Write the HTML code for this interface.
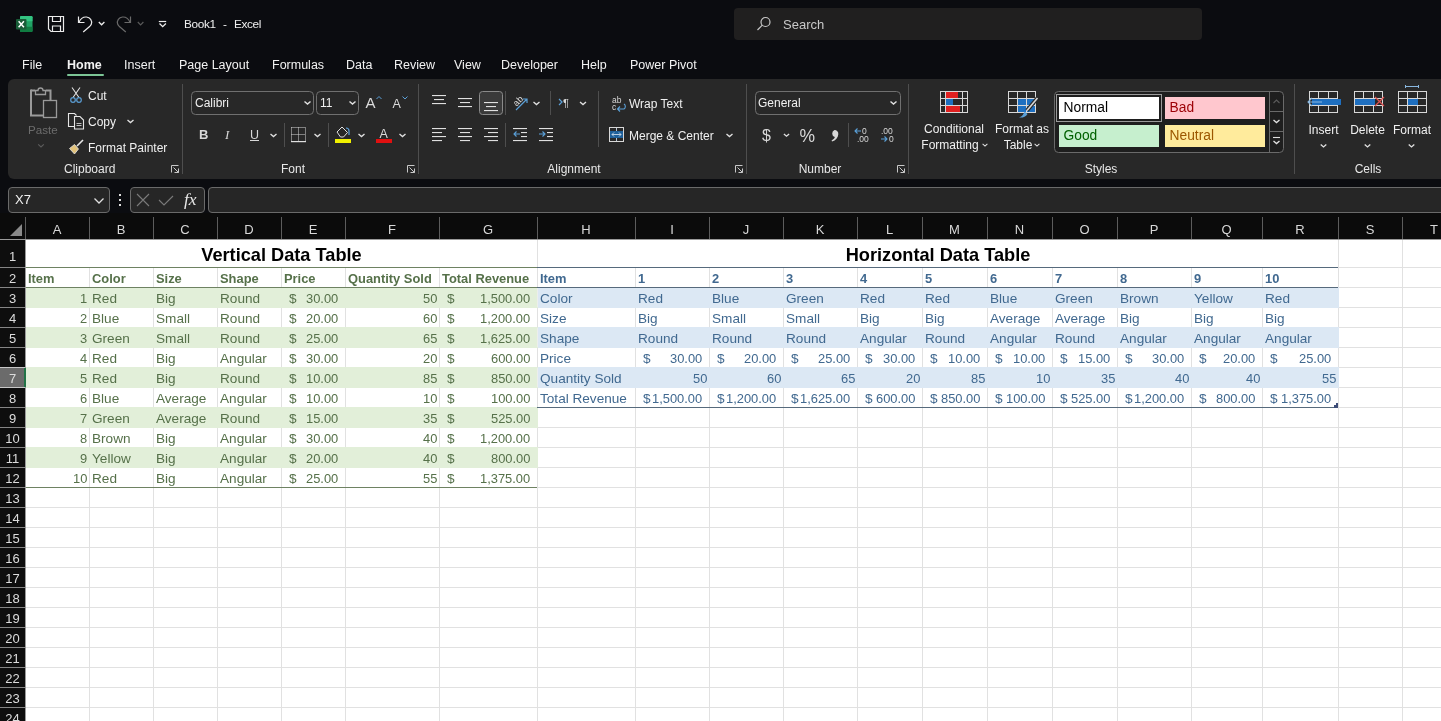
<!DOCTYPE html><html><head><meta charset="utf-8"><style>
*{margin:0;padding:0;box-sizing:border-box}
html,body{width:1441px;height:721px;overflow:hidden;background:#0b0c10;font-family:"Liberation Sans",sans-serif;position:relative}
.a,.c{will-change:transform}
.a{position:absolute;white-space:nowrap}
.ui{color:#e8e8e8;font-size:12.5px}
.lbl{color:#dcdcdc;font-size:12px}
.sep{position:absolute;width:1px;background:#4d4d4d}
.box{position:absolute;border:1px solid #6a6a6a;border-radius:4px;background:#262626}
.grid{position:absolute;left:0;top:0}
.c{position:absolute;font-size:13.6px;line-height:20px;height:20px;white-space:nowrap}
.g{color:#56714a}
.b{color:#416990}
.bold{font-weight:bold;font-size:12.9px}
.n{font-size:12.9px}
</style></head><body><div class="a" style="left:0;top:0;width:1441px;height:79px;background:#0b0c10"></div><svg class="a" style="left:0;top:0" width="200" height="40" viewBox="0 0 200 40">
<rect x="20" y="16" width="12.5" height="16" rx="1.2" fill="#21a366"/>
<path d="M21.2 16h10.1a1.2 1.2 0 0 1 1.2 1.2V21.3H20V17.2A1.2 1.2 0 0 1 21.2 16z" fill="#33c481"/>
<path d="M20 26.7h12.5v4.1a1.2 1.2 0 0 1-1.2 1.2H21.2a1.2 1.2 0 0 1-1.2-1.2z" fill="#107c41"/>
<rect x="16" y="19" width="10.5" height="10.5" rx="1" fill="#185c37"/>
<path d="M18.6 21.3l5.3 6M23.9 21.3l-5.3 6" stroke="#fff" stroke-width="1.5"/>
<g fill="none" stroke="#ececec" stroke-width="1.2">
<path d="M48.5 16.5h15v15H51l-2.5-2.5z"/><path d="M52.5 16.5v5h8v-5"/><path d="M52.5 31.5v-5.5h8v5.5"/>
<path d="M78.5 16.5v6h6"/><path d="M79 22.2C80.5 18.5 83.5 16.8 86.5 17c3.6 0.3 6 3.8 4.8 7.2-0.3 0.8-0.8 1.4-1.4 2L83.2 32"/>
<path d="M98.8 22l2.8 2.8 2.8-2.8" stroke-width="1.3"/>
<path d="M162.5 21.5h-0M158.8 21.5h7.4"/><path d="M159.5 23.5l3.2 3.2 3.2-3.2" stroke-width="1.3"/>
</g>
<g fill="none" stroke="#6a6a6a" stroke-width="1.2">
<path d="M130.5 16.5v6h-6"/><path d="M130 22.2C128.5 18.5 125.5 16.8 122.5 17c-3.6 0.3-6 3.8-4.8 7.2 0.3 0.8 0.8 1.4 1.4 2L125.8 32"/>
<path d="M137.8 22l2.8 2.8 2.8-2.8" stroke-width="1.2" stroke="#5a5a5a"/>
</g>
</svg><div class="a" style="left:183.5px;top:16px;font-size:11.8px;letter-spacing:-0.35px;color:#f0f0f0;line-height:16px">Book1</div><div class="a" style="left:223px;top:16px;font-size:11.8px;color:#f0f0f0;line-height:16px">-</div><div class="a" style="left:234px;top:16px;font-size:11.8px;letter-spacing:-0.35px;color:#f0f0f0;line-height:16px">Excel</div><div class="a" style="left:734px;top:8px;width:468px;height:32px;background:#201f1f;border-radius:4px"></div><svg class="a" style="left:756px;top:16px" width="16" height="16" viewBox="0 0 16 16" fill="none" stroke="#c8c8c8" stroke-width="1.2">
<circle cx="9.5" cy="6" r="4.5"/><path d="M6.3 9.2L1.5 14"/></svg><div class="a" style="left:783px;top:17px;font-size:13px;color:#c8c8c8;line-height:16px">Search</div><div class="a" style="left:22px;top:57px;font-size:12.5px;color:#f2f2f2;line-height:16px;font-weight:normal">File</div><div class="a" style="left:67px;top:57px;font-size:12.5px;color:#f2f2f2;line-height:16px;font-weight:bold">Home</div><div class="a" style="left:124px;top:57px;font-size:12.5px;color:#f2f2f2;line-height:16px;font-weight:normal">Insert</div><div class="a" style="left:179px;top:57px;font-size:12.5px;color:#f2f2f2;line-height:16px;font-weight:normal">Page Layout</div><div class="a" style="left:272px;top:57px;font-size:12.5px;color:#f2f2f2;line-height:16px;font-weight:normal">Formulas</div><div class="a" style="left:346px;top:57px;font-size:12.5px;color:#f2f2f2;line-height:16px;font-weight:normal">Data</div><div class="a" style="left:394px;top:57px;font-size:12.5px;color:#f2f2f2;line-height:16px;font-weight:normal">Review</div><div class="a" style="left:454px;top:57px;font-size:12.5px;color:#f2f2f2;line-height:16px;font-weight:normal">View</div><div class="a" style="left:501px;top:57px;font-size:12.5px;color:#f2f2f2;line-height:16px;font-weight:normal">Developer</div><div class="a" style="left:581px;top:57px;font-size:12.5px;color:#f2f2f2;line-height:16px;font-weight:normal">Help</div><div class="a" style="left:630px;top:57px;font-size:12.5px;color:#f2f2f2;line-height:16px;font-weight:normal">Power Pivot</div><div class="a" style="left:67px;top:74px;width:37px;height:2px;background:#7cc596;border-radius:1px"></div><div class="a" style="left:8px;top:79px;width:1450px;height:100px;background:#282828;border-radius:6px"></div><svg class="a" style="left:0;top:79px" width="1441" height="100" viewBox="0 79 1441 100" font-family="Liberation Sans"><path d="M31 90.5h4M46 90.5h4.5v10" fill="none" stroke="#9a9a9a" stroke-width="2"/><path d="M31 89.5v26h12" fill="none" stroke="#9a9a9a" stroke-width="2"/><path d="M35.5 94.5v-4h2.5a2.5 2.5 0 0 1 5 0h2.5v4z" fill="none" stroke="#9a9a9a" stroke-width="1.3"/><rect x="43.5" y="100.5" width="13" height="17" fill="none" stroke="#9a9a9a" stroke-width="1.3"/><text x="28" y="134" font-size="11.6" fill="#6c6c6c" text-anchor="start" >Paste</text><path d="M38.2 144.4l2.8 2.52l2.8 -2.52" fill="none" stroke="#5c5c5c" stroke-width="1.2"/><path d="M72 87.5l7 10M80 87.5l-7 10" fill="none" stroke="#e0e0e0" stroke-width="1.1"/><circle cx="73" cy="100" r="2.3" fill="none" stroke="#5a9bd0" stroke-width="1.2"/><circle cx="79" cy="100" r="2.3" fill="none" stroke="#5a9bd0" stroke-width="1.2"/><text x="88" y="100" font-size="12" fill="#f0f0f0" text-anchor="start" >Cut</text><path d="M74 126.5h-5.5v-13h6l2 2" fill="none" stroke="#e6e6e6" stroke-width="1.1"/><path d="M74.5 116.5h5.5l3.5 3.5v9h-9z" fill="none" stroke="#e6e6e6" stroke-width="1.1"/><path d="M76.5 123.5h5M76.5 125.5h5" stroke="#e6e6e6" stroke-width="0.8"/><text x="88" y="126" font-size="12" fill="#f0f0f0" text-anchor="start" >Copy</text><path d="M127.5 119.9l3 2.7l3 -2.7" fill="none" stroke="#e0e0e0" stroke-width="1.3"/><path d="M83 140l-6 6" stroke="#e6e6e6" stroke-width="1.6"/><path d="M69.5 148.5l5-4 4 4.5-4 5z" fill="#e2c27a" stroke="#e6e6e6" stroke-width="0.8"/><text x="88" y="152" font-size="12" fill="#f0f0f0" text-anchor="start" >Format Painter</text><text x="64" y="173" font-size="12" fill="#e8e8e8" text-anchor="start" >Clipboard</text><path d="M171.5 172.5v-7h7" fill="none" stroke="#c8c8c8" stroke-width="1"/><path d="M173.5 167.5l5 5M178.5 168.5v4h-4" fill="none" stroke="#c8c8c8" stroke-width="1"/><rect x="182" y="84" width="1" height="90" fill="#4e4e4e"/><rect x="191.5" y="91.5" width="122" height="23" rx="4" fill="none" stroke="#707070"/><text x="195" y="107" font-size="12" fill="#f0f0f0" text-anchor="start" >Calibri</text><path d="M304.5 101.4l3 2.7l3 -2.7" fill="none" stroke="#e0e0e0" stroke-width="1.4"/><rect x="316.5" y="91.5" width="42" height="23" rx="4" fill="none" stroke="#707070"/><text x="320" y="107" font-size="12" fill="#f0f0f0" text-anchor="start" >11</text><path d="M349.5 101.4l3 2.7l3 -2.7" fill="none" stroke="#e0e0e0" stroke-width="1.4"/><text x="365.5" y="107.5" font-size="15" fill="#dadada" text-anchor="start" >A</text><path d="M376.5 99l2.5-2.5 2.5 2.5" fill="none" stroke="#5ba0d8" stroke-width="1"/><text x="392.5" y="107.5" font-size="12.5" fill="#dadada" text-anchor="start" >A</text><path d="M402.5 96.5l2.5 2.5 2.5-2.5" fill="none" stroke="#5ba0d8" stroke-width="1"/><text x="199" y="139" font-size="13" fill="#d8d8d8" text-anchor="start" font-weight="bold">B</text><text x="225" y="139" font-size="13" fill="#d8d8d8" text-anchor="start" font-style="italic" font-family="Liberation Serif">I</text><text x="250" y="139" font-size="12.5" fill="#d8d8d8" text-anchor="start" >U</text><rect x="250" y="140" width="9" height="1" fill="#d8d8d8"/><path d="M270.5 133.9l3 2.7l3 -2.7" fill="none" stroke="#e0e0e0" stroke-width="1.3"/><rect x="284" y="123" width="1" height="24" fill="#4e4e4e"/><path d="M291.5 127.5h14v14M291.5 127.5v14M298.5 127.5v14M291.5 134.5h14" fill="none" stroke="#d8d8d8" stroke-width="1" stroke-dasharray="1 1"/><rect x="291" y="141" width="15" height="1.2" fill="#e0e0e0"/><path d="M314.5 133.9l3 2.7l3 -2.7" fill="none" stroke="#e0e0e0" stroke-width="1.3"/><rect x="328" y="123" width="1" height="24" fill="#4e4e4e"/><path d="M337 132l5-5 5.5 5.5-4 4.5h-3z" fill="none" stroke="#e0e0e0" stroke-width="1"/><path d="M346 128a3 3 0 0 1 3 3v4" fill="none" stroke="#5ba0d8" stroke-width="1.2"/><rect x="335" y="139" width="16" height="4" fill="#f0f000"/><path d="M358.5 133.9l3 2.7l3 -2.7" fill="none" stroke="#e0e0e0" stroke-width="1.3"/><text x="379.5" y="138" font-size="12.5" fill="#dadada" text-anchor="start" >A</text><rect x="376" y="139" width="16" height="4" fill="#e01010"/><path d="M399.5 133.9l3 2.7l3 -2.7" fill="none" stroke="#e0e0e0" stroke-width="1.3"/><text x="293" y="173" font-size="12" fill="#e8e8e8" text-anchor="middle" >Font</text><path d="M407.5 172.5v-7h7" fill="none" stroke="#c8c8c8" stroke-width="1"/><path d="M409.5 167.5l5 5M414.5 168.5v4h-4" fill="none" stroke="#c8c8c8" stroke-width="1"/><rect x="418" y="84" width="1" height="90" fill="#4e4e4e"/><rect x="432" y="95" width="14" height="1.1" fill="#e0e0e0"/><rect x="434" y="99" width="10" height="1.1" fill="#e0e0e0"/><rect x="432" y="103" width="14" height="1.1" fill="#e0e0e0"/><rect x="458" y="98" width="14" height="1.1" fill="#e0e0e0"/><rect x="460" y="102" width="10" height="1.1" fill="#e0e0e0"/><rect x="458" y="106" width="14" height="1.1" fill="#e0e0e0"/><rect x="479.5" y="91.5" width="23" height="23" rx="3" fill="#3a3a3a" stroke="#8a8a8a"/><rect x="484" y="102" width="14" height="1.1" fill="#e0e0e0"/><rect x="486" y="106" width="10" height="1.1" fill="#e0e0e0"/><rect x="484" y="110" width="14" height="1.1" fill="#e0e0e0"/><rect x="505" y="91" width="1" height="24" fill="#4e4e4e"/><text x="513" y="104" font-size="9" fill="#e0e0e0" transform="rotate(-45 518 101)">ab</text><path d="M516 110l11-11M523 99h4v4" fill="none" stroke="#5ba0d8" stroke-width="1.2"/><path d="M533.5 101.9l3 2.7l3 -2.7" fill="none" stroke="#e0e0e0" stroke-width="1.3"/><rect x="550" y="91" width="1" height="24" fill="#4e4e4e"/><path d="M559 99l3 3-3 3" fill="none" stroke="#5ba0d8" stroke-width="1.2"/><text x="563" y="107" font-size="11" fill="#d8d8d8" text-anchor="start" >¶</text><path d="M580 101.9l3 2.7l3 -2.7" fill="none" stroke="#e0e0e0" stroke-width="1.3"/><rect x="598" y="91" width="1" height="56" fill="#4e4e4e"/><rect x="432" y="128" width="14" height="1.1" fill="#e0e0e0"/><rect x="432" y="132" width="10" height="1.1" fill="#e0e0e0"/><rect x="432" y="136" width="14" height="1.1" fill="#e0e0e0"/><rect x="432" y="140" width="10" height="1.1" fill="#e0e0e0"/><rect x="458" y="128" width="14" height="1.1" fill="#e0e0e0"/><rect x="460" y="132" width="10" height="1.1" fill="#e0e0e0"/><rect x="458" y="136" width="14" height="1.1" fill="#e0e0e0"/><rect x="460" y="140" width="10" height="1.1" fill="#e0e0e0"/><rect x="484" y="128" width="14" height="1.1" fill="#e0e0e0"/><rect x="488" y="132" width="10" height="1.1" fill="#e0e0e0"/><rect x="484" y="136" width="14" height="1.1" fill="#e0e0e0"/><rect x="488" y="140" width="10" height="1.1" fill="#e0e0e0"/><rect x="505" y="123" width="1" height="24" fill="#4e4e4e"/><rect x="513" y="128" width="14" height="1.1" fill="#e0e0e0"/><rect x="513" y="140" width="14" height="1.1" fill="#e0e0e0"/><rect x="521" y="132" width="6" height="1.1" fill="#e0e0e0"/><rect x="521" y="136" width="6" height="1.1" fill="#e0e0e0"/><path d="M520 134h-6M516.5 131.5l-2.5 2.5 2.5 2.5" fill="none" stroke="#5ba0d8" stroke-width="1.1"/><rect x="539" y="128" width="14" height="1.1" fill="#e0e0e0"/><rect x="539" y="140" width="14" height="1.1" fill="#e0e0e0"/><rect x="547" y="132" width="6" height="1.1" fill="#e0e0e0"/><rect x="547" y="136" width="6" height="1.1" fill="#e0e0e0"/><path d="M539 134h6M542.5 131.5l2.5 2.5-2.5 2.5" fill="none" stroke="#5ba0d8" stroke-width="1.1"/><text x="612" y="102.5" font-size="8.5" fill="#d8d8d8" text-anchor="start" >ab</text><text x="612" y="110" font-size="8.5" fill="#d8d8d8" text-anchor="start" >c</text><path d="M624 104a3 3 0 0 1 0 5h-6M620 106.5l-2.5 2.5 2.5 2.5" fill="none" stroke="#5ba0d8" stroke-width="1.1"/><text x="629" y="108" font-size="12" fill="#f0f0f0" text-anchor="start" >Wrap Text</text><rect x="609.5" y="127.5" width="14" height="14" fill="none" stroke="#d8d8d8"/><rect x="610" y="131" width="13" height="7" fill="#1e5f99"/><path d="M612 134.5h9M614 132.5l-2 2 2 2M619 132.5l2 2-2 2M616.5 128v3M616.5 138v3" fill="none" stroke="#c8d8e8" stroke-width="0.9"/><text x="629" y="140" font-size="12" fill="#f0f0f0" text-anchor="start" >Merge &amp; Center</text><path d="M726.5 133.9l3 2.7l3 -2.7" fill="none" stroke="#e0e0e0" stroke-width="1.3"/><text x="574" y="173" font-size="12" fill="#e8e8e8" text-anchor="middle" >Alignment</text><path d="M735.5 172.5v-7h7" fill="none" stroke="#c8c8c8" stroke-width="1"/><path d="M737.5 167.5l5 5M742.5 168.5v4h-4" fill="none" stroke="#c8c8c8" stroke-width="1"/><rect x="746" y="84" width="1" height="90" fill="#4e4e4e"/><rect x="755.5" y="91.5" width="145" height="23" rx="4" fill="none" stroke="#707070"/><text x="758" y="107" font-size="12" fill="#f0f0f0" text-anchor="start" >General</text><path d="M890.5 101.4l3 2.7l3 -2.7" fill="none" stroke="#e0e0e0" stroke-width="1.4"/><text x="762" y="141" font-size="16" fill="#d8d8d8" text-anchor="start" >$</text><path d="M783.9 133.9l2.6 2.3400000000000003l2.6 -2.3400000000000003" fill="none" stroke="#e0e0e0" stroke-width="1.3"/><text x="799.5" y="141.5" font-size="17.5" fill="#d8d8d8" text-anchor="start" >%</text><path d="M834.5 130a3.8 3.8 0 0 1 3.8 4.2c-0.3 3.5-2.5 6.2-6.3 7.3l-0.4-1c2-1 3-2.2 3.2-3.4a3.8 3.8 0 0 1-0.3-7.1z" fill="#d8d8d8"/><rect x="848" y="123" width="1" height="24" fill="#4e4e4e"/><path d="M861 131h-6M857.5 128.5l-2.5 2.5 2.5 2.5" fill="none" stroke="#5ba0d8" stroke-width="1.1"/><text x="862" y="134" font-size="8.5" fill="#d8d8d8" text-anchor="start" >0</text><text x="857" y="142" font-size="8.5" fill="#d8d8d8" text-anchor="start" >.00</text><text x="881" y="134" font-size="8.5" fill="#d8d8d8" text-anchor="start" >.00</text><path d="M881 139h6M884.5 136.5l2.5 2.5-2.5 2.5" fill="none" stroke="#5ba0d8" stroke-width="1.1"/><text x="889" y="142" font-size="8.5" fill="#d8d8d8" text-anchor="start" >0</text><text x="820" y="173" font-size="12" fill="#e8e8e8" text-anchor="middle" >Number</text><path d="M897.5 172.5v-7h7" fill="none" stroke="#c8c8c8" stroke-width="1"/><path d="M899.5 167.5l5 5M904.5 168.5v4h-4" fill="none" stroke="#c8c8c8" stroke-width="1"/><rect x="908" y="84" width="1" height="90" fill="#4e4e4e"/><rect x="946" y="92" width="12" height="6" fill="#e02020"/><rect x="946" y="99" width="7" height="6" fill="#1e6fc0"/><rect x="946" y="106" width="14" height="6" fill="#e02020"/><rect x="940.5" y="91.5" width="27" height="21" fill="none" stroke="#d8d8d8"/><path d="M945.5 92v20M962.5 92v20M941 98.5h26M941 105.5h26" stroke="#d8d8d8" stroke-width="1"/><text x="954" y="133" font-size="12" fill="#f0f0f0" text-anchor="middle" >Conditional</text><text x="950" y="149" font-size="12" fill="#f0f0f0" text-anchor="middle" >Formatting</text><path d="M982.6 143.9l2.4 2.16l2.4 -2.16" fill="none" stroke="#e0e0e0" stroke-width="1.1"/><rect x="1018" y="99" width="18" height="13" fill="#1e6fc0"/><rect x="1008.5" y="91.5" width="27" height="21" fill="none" stroke="#d8d8d8"/><path d="M1017.5 92v20M1026.5 92v20M1009 98.5h26M1009 105.5h26" stroke="#d8d8d8" stroke-width="1"/><path d="M1037.5 98l-10.5 12.5" stroke="#282828" stroke-width="4"/><path d="M1037.5 98l-10.5 12.5" stroke="#d8d8d8" stroke-width="1.6"/><path d="M1019 117.5c3-1 4.5-3 5.5-6l3 2.5c-2 3-5 4-8.5 3.5z" fill="#5ba0d8"/><text x="1022" y="133" font-size="12" fill="#f0f0f0" text-anchor="middle" >Format as</text><text x="1018" y="149" font-size="12" fill="#f0f0f0" text-anchor="middle" >Table</text><path d="M1034.6 143.9l2.4 2.16l2.4 -2.16" fill="none" stroke="#e0e0e0" stroke-width="1.1"/><rect x="1054.5" y="91.5" width="229" height="61" rx="4" fill="#1e1e1e" stroke="#6a6a6a"/><rect x="1056.5" y="94.5" width="105" height="27" fill="none" stroke="#9a9a9a"/><rect x="1059" y="97" width="100" height="22" fill="#ffffff"/><rect x="1165" y="97" width="100" height="22" fill="#ffc7ce"/><rect x="1059" y="125" width="100" height="22" fill="#c6efce"/><rect x="1165" y="125" width="100" height="22" fill="#ffeb9c"/><text x="1063.5" y="112" font-size="13.8" fill="#000000" text-anchor="start" >Normal</text><text x="1169.5" y="112" font-size="13.8" fill="#9c0006" text-anchor="start" >Bad</text><text x="1063.5" y="140" font-size="13.8" fill="#006100" text-anchor="start" >Good</text><text x="1169.5" y="140" font-size="13.8" fill="#9c5700" text-anchor="start" >Neutral</text><path d="M1269.5 92v60" stroke="#6a6a6a"/><path d="M1270 111.5h13M1270 131.5h13" stroke="#6a6a6a"/><path d="M1273.5 103l3-3 3 3" fill="none" stroke="#5a5a5a" stroke-width="1.1"/><path d="M1273.5 119.9l3 2.7l3 -2.7" fill="none" stroke="#e0e0e0" stroke-width="1.3"/><path d="M1273 137.5h7" stroke="#e0e0e0" stroke-width="1.1"/><path d="M1273.5 140.9l3 2.7l3 -2.7" fill="none" stroke="#e0e0e0" stroke-width="1.3"/><text x="1101" y="173" font-size="12" fill="#e8e8e8" text-anchor="middle" >Styles</text><rect x="1294" y="84" width="1" height="90" fill="#4e4e4e"/><rect x="1309.5" y="91.5" width="28" height="21" fill="none" stroke="#d8d8d8"/><path d="M1318.5 92v20M1328.5 92v20M1310 98.5h27M1310 105.5h27" stroke="#d8d8d8" stroke-width="1"/><rect x="1312" y="99" width="29" height="6" fill="#1e6fc0"/><path d="M1308 102h14M1312 98l-4 4 4 4" fill="none" stroke="#8ab8e0" stroke-width="1.1"/><rect x="1354.5" y="91.5" width="28" height="21" fill="none" stroke="#d8d8d8"/><path d="M1363.5 92v20M1373.5 92v20M1355 98.5h27M1355 105.5h27" stroke="#d8d8d8" stroke-width="1"/><rect x="1355" y="99" width="20" height="6" fill="#1e6fc0"/><path d="M1375 97l9 9M1384 97l-9 9" stroke="#e05050" stroke-width="1.2"/><rect x="1398.5" y="91.5" width="28" height="21" fill="none" stroke="#d8d8d8"/><path d="M1407.5 92v20M1417.5 92v20M1399 98.5h27M1399 105.5h27" stroke="#d8d8d8" stroke-width="1"/><rect x="1408" y="99" width="10" height="6" fill="#1e6fc0"/><path d="M1405 86.5h14M1405.5 85v3M1418.5 85v3" stroke="#8ab8e0" stroke-width="1"/><text x="1323.5" y="134" font-size="12" fill="#f0f0f0" text-anchor="middle" >Insert</text><text x="1367.5" y="134" font-size="12" fill="#f0f0f0" text-anchor="middle" >Delete</text><text x="1412" y="134" font-size="12" fill="#f0f0f0" text-anchor="middle" >Format</text><path d="M1320.7 144.4l2.8 2.52l2.8 -2.52" fill="none" stroke="#e0e0e0" stroke-width="1.3"/><path d="M1364.7 144.4l2.8 2.52l2.8 -2.52" fill="none" stroke="#e0e0e0" stroke-width="1.3"/><path d="M1408.7 144.4l2.8 2.52l2.8 -2.52" fill="none" stroke="#e0e0e0" stroke-width="1.3"/><text x="1368" y="173" font-size="12" fill="#e8e8e8" text-anchor="middle" >Cells</text></svg><div class="a" style="left:0;top:179px;width:1441px;height:34px;background:#0b0c10"></div><div class="box" style="left:8px;top:187px;width:102px;height:26px"></div><div class="a" style="left:15px;top:192px;font-size:13px;color:#f0f0f0;line-height:16px">X7</div><svg class="a" style="left:93px;top:197px" width="12" height="8" viewBox="0 0 12 8" fill="none" stroke="#e0e0e0" stroke-width="1.3"><path d="M1.5 1.5l4.5 4.5 4.5-4.5"/></svg><div class="a" style="left:119px;top:194px;width:2px;height:2px;background:#ddd"></div><div class="a" style="left:119px;top:199px;width:2px;height:2px;background:#ddd"></div><div class="a" style="left:119px;top:204px;width:2px;height:2px;background:#ddd"></div><div class="box" style="left:130px;top:187px;width:75px;height:26px"></div><svg class="a" style="left:136px;top:192px" width="60" height="18" viewBox="0 0 60 18" fill="none" stroke="#7a7a7a" stroke-width="1.1">
<path d="M1 2l12 12M13 2L1 14"/><path d="M23 8l5 5 9-9"/></svg><div class="a" style="left:184px;top:189px;font-size:17.5px;color:#e8e8e8;font-family:'Liberation Serif',serif;font-style:italic;line-height:20px">fx</div><div class="a" style="left:208px;top:187px;width:1250px;height:26px;border:1px solid #6a6a6a;border-radius:4px;background:#262626"></div><div class="a" style="left:0;top:213px;width:1441px;height:26px;background:#0b0b0b"></div><svg class="a" style="left:10px;top:224px" width="13" height="13" viewBox="0 0 13 13"><path d="M12 0V12H0z" fill="#8a8a8a"/></svg><div class="sep" style="left:25px;top:217px;height:22px;background:#5c5c5c"></div><div class="a" style="left:25px;top:221px;width:64px;text-align:center;font-size:13px;color:#d8d8d8;line-height:18px">A</div><div class="sep" style="left:89px;top:217px;height:22px;background:#5c5c5c"></div><div class="a" style="left:89px;top:221px;width:64px;text-align:center;font-size:13px;color:#d8d8d8;line-height:18px">B</div><div class="sep" style="left:153px;top:217px;height:22px;background:#5c5c5c"></div><div class="a" style="left:153px;top:221px;width:64px;text-align:center;font-size:13px;color:#d8d8d8;line-height:18px">C</div><div class="sep" style="left:217px;top:217px;height:22px;background:#5c5c5c"></div><div class="a" style="left:217px;top:221px;width:64px;text-align:center;font-size:13px;color:#d8d8d8;line-height:18px">D</div><div class="sep" style="left:281px;top:217px;height:22px;background:#5c5c5c"></div><div class="a" style="left:281px;top:221px;width:64px;text-align:center;font-size:13px;color:#d8d8d8;line-height:18px">E</div><div class="sep" style="left:345px;top:217px;height:22px;background:#5c5c5c"></div><div class="a" style="left:345px;top:221px;width:94px;text-align:center;font-size:13px;color:#d8d8d8;line-height:18px">F</div><div class="sep" style="left:439px;top:217px;height:22px;background:#5c5c5c"></div><div class="a" style="left:439px;top:221px;width:98px;text-align:center;font-size:13px;color:#d8d8d8;line-height:18px">G</div><div class="sep" style="left:537px;top:217px;height:22px;background:#5c5c5c"></div><div class="a" style="left:537px;top:221px;width:98px;text-align:center;font-size:13px;color:#d8d8d8;line-height:18px">H</div><div class="sep" style="left:635px;top:217px;height:22px;background:#5c5c5c"></div><div class="a" style="left:635px;top:221px;width:74px;text-align:center;font-size:13px;color:#d8d8d8;line-height:18px">I</div><div class="sep" style="left:709px;top:217px;height:22px;background:#5c5c5c"></div><div class="a" style="left:709px;top:221px;width:74px;text-align:center;font-size:13px;color:#d8d8d8;line-height:18px">J</div><div class="sep" style="left:783px;top:217px;height:22px;background:#5c5c5c"></div><div class="a" style="left:783px;top:221px;width:74px;text-align:center;font-size:13px;color:#d8d8d8;line-height:18px">K</div><div class="sep" style="left:857px;top:217px;height:22px;background:#5c5c5c"></div><div class="a" style="left:857px;top:221px;width:65px;text-align:center;font-size:13px;color:#d8d8d8;line-height:18px">L</div><div class="sep" style="left:922px;top:217px;height:22px;background:#5c5c5c"></div><div class="a" style="left:922px;top:221px;width:65px;text-align:center;font-size:13px;color:#d8d8d8;line-height:18px">M</div><div class="sep" style="left:987px;top:217px;height:22px;background:#5c5c5c"></div><div class="a" style="left:987px;top:221px;width:65px;text-align:center;font-size:13px;color:#d8d8d8;line-height:18px">N</div><div class="sep" style="left:1052px;top:217px;height:22px;background:#5c5c5c"></div><div class="a" style="left:1052px;top:221px;width:65px;text-align:center;font-size:13px;color:#d8d8d8;line-height:18px">O</div><div class="sep" style="left:1117px;top:217px;height:22px;background:#5c5c5c"></div><div class="a" style="left:1117px;top:221px;width:74px;text-align:center;font-size:13px;color:#d8d8d8;line-height:18px">P</div><div class="sep" style="left:1191px;top:217px;height:22px;background:#5c5c5c"></div><div class="a" style="left:1191px;top:221px;width:71px;text-align:center;font-size:13px;color:#d8d8d8;line-height:18px">Q</div><div class="sep" style="left:1262px;top:217px;height:22px;background:#5c5c5c"></div><div class="a" style="left:1262px;top:221px;width:76px;text-align:center;font-size:13px;color:#d8d8d8;line-height:18px">R</div><div class="sep" style="left:1338px;top:217px;height:22px;background:#5c5c5c"></div><div class="a" style="left:1338px;top:221px;width:64px;text-align:center;font-size:13px;color:#d8d8d8;line-height:18px">S</div><div class="sep" style="left:1402px;top:217px;height:22px;background:#5c5c5c"></div><div class="a" style="left:1402px;top:221px;width:64px;text-align:center;font-size:13px;color:#d8d8d8;line-height:18px">T</div><div class="a" style="left:25px;top:239px;width:1416px;height:482px;background:#ffffff"></div><div class="a" style="left:0;top:239px;width:25px;height:482px;background:#0e0e0e"></div><div class="a" style="left:89px;top:240px;width:1px;height:481px;background:#e1e1e1"></div><div class="a" style="left:153px;top:240px;width:1px;height:481px;background:#e1e1e1"></div><div class="a" style="left:217px;top:240px;width:1px;height:481px;background:#e1e1e1"></div><div class="a" style="left:281px;top:240px;width:1px;height:481px;background:#e1e1e1"></div><div class="a" style="left:345px;top:240px;width:1px;height:481px;background:#e1e1e1"></div><div class="a" style="left:439px;top:240px;width:1px;height:481px;background:#e1e1e1"></div><div class="a" style="left:537px;top:240px;width:1px;height:481px;background:#e1e1e1"></div><div class="a" style="left:635px;top:240px;width:1px;height:481px;background:#e1e1e1"></div><div class="a" style="left:709px;top:240px;width:1px;height:481px;background:#e1e1e1"></div><div class="a" style="left:783px;top:240px;width:1px;height:481px;background:#e1e1e1"></div><div class="a" style="left:857px;top:240px;width:1px;height:481px;background:#e1e1e1"></div><div class="a" style="left:922px;top:240px;width:1px;height:481px;background:#e1e1e1"></div><div class="a" style="left:987px;top:240px;width:1px;height:481px;background:#e1e1e1"></div><div class="a" style="left:1052px;top:240px;width:1px;height:481px;background:#e1e1e1"></div><div class="a" style="left:1117px;top:240px;width:1px;height:481px;background:#e1e1e1"></div><div class="a" style="left:1191px;top:240px;width:1px;height:481px;background:#e1e1e1"></div><div class="a" style="left:1262px;top:240px;width:1px;height:481px;background:#e1e1e1"></div><div class="a" style="left:1338px;top:240px;width:1px;height:481px;background:#e1e1e1"></div><div class="a" style="left:1402px;top:240px;width:1px;height:481px;background:#e1e1e1"></div><div class="a" style="left:1466px;top:240px;width:1px;height:481px;background:#e1e1e1"></div><div class="a" style="left:26px;top:267px;width:1415px;height:1px;background:#e1e1e1"></div><div class="a" style="left:26px;top:287px;width:1415px;height:1px;background:#e1e1e1"></div><div class="a" style="left:26px;top:307px;width:1415px;height:1px;background:#e1e1e1"></div><div class="a" style="left:26px;top:327px;width:1415px;height:1px;background:#e1e1e1"></div><div class="a" style="left:26px;top:347px;width:1415px;height:1px;background:#e1e1e1"></div><div class="a" style="left:26px;top:367px;width:1415px;height:1px;background:#e1e1e1"></div><div class="a" style="left:26px;top:387px;width:1415px;height:1px;background:#e1e1e1"></div><div class="a" style="left:26px;top:407px;width:1415px;height:1px;background:#e1e1e1"></div><div class="a" style="left:26px;top:427px;width:1415px;height:1px;background:#e1e1e1"></div><div class="a" style="left:26px;top:447px;width:1415px;height:1px;background:#e1e1e1"></div><div class="a" style="left:26px;top:467px;width:1415px;height:1px;background:#e1e1e1"></div><div class="a" style="left:26px;top:487px;width:1415px;height:1px;background:#e1e1e1"></div><div class="a" style="left:26px;top:507px;width:1415px;height:1px;background:#e1e1e1"></div><div class="a" style="left:26px;top:527px;width:1415px;height:1px;background:#e1e1e1"></div><div class="a" style="left:26px;top:547px;width:1415px;height:1px;background:#e1e1e1"></div><div class="a" style="left:26px;top:567px;width:1415px;height:1px;background:#e1e1e1"></div><div class="a" style="left:26px;top:587px;width:1415px;height:1px;background:#e1e1e1"></div><div class="a" style="left:26px;top:607px;width:1415px;height:1px;background:#e1e1e1"></div><div class="a" style="left:26px;top:627px;width:1415px;height:1px;background:#e1e1e1"></div><div class="a" style="left:26px;top:647px;width:1415px;height:1px;background:#e1e1e1"></div><div class="a" style="left:26px;top:667px;width:1415px;height:1px;background:#e1e1e1"></div><div class="a" style="left:26px;top:687px;width:1415px;height:1px;background:#e1e1e1"></div><div class="a" style="left:26px;top:707px;width:1415px;height:1px;background:#e1e1e1"></div><div class="a" style="left:26px;top:727px;width:1415px;height:1px;background:#e1e1e1"></div><div class="a" style="left:26px;top:240px;width:511px;height:27px;background:#fff"></div><div class="a" style="left:538px;top:240px;width:800px;height:27px;background:#fff"></div><div class="a" style="left:26px;top:287px;width:512px;height:21px;background:#e2efd9"></div><div class="a" style="left:26px;top:327px;width:512px;height:21px;background:#e2efd9"></div><div class="a" style="left:26px;top:367px;width:512px;height:21px;background:#e2efd9"></div><div class="a" style="left:26px;top:407px;width:512px;height:21px;background:#e2efd9"></div><div class="a" style="left:26px;top:447px;width:512px;height:21px;background:#e2efd9"></div><div class="a" style="left:538px;top:287px;width:801px;height:21px;background:#dce8f4"></div><div class="a" style="left:538px;top:327px;width:801px;height:21px;background:#dce8f4"></div><div class="a" style="left:538px;top:367px;width:801px;height:21px;background:#dce8f4"></div><div class="a" style="left:537px;top:288px;width:1px;height:19px;background:#eceeec"></div><div class="a" style="left:537px;top:328px;width:1px;height:19px;background:#eceeec"></div><div class="a" style="left:537px;top:368px;width:1px;height:19px;background:#eceeec"></div><div class="a" style="left:26px;top:267px;width:511px;height:1px;background:#6e8262"></div><div class="a" style="left:26px;top:287px;width:511px;height:1px;background:#6e8262"></div><div class="a" style="left:26px;top:487px;width:511px;height:1px;background:#6e8262"></div><div class="a" style="left:537px;top:267px;width:801px;height:1px;background:#566a7c"></div><div class="a" style="left:537px;top:287px;width:801px;height:1px;background:#566a7c"></div><div class="a" style="left:537px;top:407px;width:801px;height:1px;background:#566a7c"></div><div class="a" style="left:25px;top:239px;width:1px;height:482px;background:#9a9a9a"></div><div class="a" style="left:0px;top:239px;width:1441px;height:1px;background:#9a9a9a"></div><div class="a" style="left:0;top:267px;width:25px;height:1px;background:#858585"></div><div class="a" style="left:0;top:247px;width:25px;height:20px;line-height:20px;text-align:center;font-size:13px;color:#dcdcdc">1</div><div class="a" style="left:0;top:287px;width:25px;height:1px;background:#858585"></div><div class="a" style="left:0;top:269px;width:25px;height:20px;line-height:20px;text-align:center;font-size:13px;color:#dcdcdc">2</div><div class="a" style="left:0;top:307px;width:25px;height:1px;background:#858585"></div><div class="a" style="left:0;top:289px;width:25px;height:20px;line-height:20px;text-align:center;font-size:13px;color:#dcdcdc">3</div><div class="a" style="left:0;top:327px;width:25px;height:1px;background:#858585"></div><div class="a" style="left:0;top:309px;width:25px;height:20px;line-height:20px;text-align:center;font-size:13px;color:#dcdcdc">4</div><div class="a" style="left:0;top:347px;width:25px;height:1px;background:#858585"></div><div class="a" style="left:0;top:329px;width:25px;height:20px;line-height:20px;text-align:center;font-size:13px;color:#dcdcdc">5</div><div class="a" style="left:0;top:367px;width:25px;height:1px;background:#858585"></div><div class="a" style="left:0;top:349px;width:25px;height:20px;line-height:20px;text-align:center;font-size:13px;color:#dcdcdc">6</div><div class="a" style="left:0;top:368px;width:25px;height:19px;background:#6b6b6b"></div><div class="a" style="left:24px;top:368px;width:2px;height:19px;background:#217346"></div><div class="a" style="left:0;top:367px;width:25px;height:1px;background:#c8c8c8"></div><div class="a" style="left:0;top:387px;width:25px;height:1px;background:#c8c8c8"></div><div class="a" style="left:0;top:369px;width:25px;height:20px;line-height:20px;text-align:center;font-size:13px;color:#dcdcdc">7</div><div class="a" style="left:0;top:407px;width:25px;height:1px;background:#858585"></div><div class="a" style="left:0;top:389px;width:25px;height:20px;line-height:20px;text-align:center;font-size:13px;color:#dcdcdc">8</div><div class="a" style="left:0;top:427px;width:25px;height:1px;background:#858585"></div><div class="a" style="left:0;top:409px;width:25px;height:20px;line-height:20px;text-align:center;font-size:13px;color:#dcdcdc">9</div><div class="a" style="left:0;top:447px;width:25px;height:1px;background:#858585"></div><div class="a" style="left:0;top:429px;width:25px;height:20px;line-height:20px;text-align:center;font-size:13px;color:#dcdcdc">10</div><div class="a" style="left:0;top:467px;width:25px;height:1px;background:#858585"></div><div class="a" style="left:0;top:449px;width:25px;height:20px;line-height:20px;text-align:center;font-size:13px;color:#dcdcdc">11</div><div class="a" style="left:0;top:487px;width:25px;height:1px;background:#858585"></div><div class="a" style="left:0;top:469px;width:25px;height:20px;line-height:20px;text-align:center;font-size:13px;color:#dcdcdc">12</div><div class="a" style="left:0;top:507px;width:25px;height:1px;background:#858585"></div><div class="a" style="left:0;top:489px;width:25px;height:20px;line-height:20px;text-align:center;font-size:13px;color:#dcdcdc">13</div><div class="a" style="left:0;top:527px;width:25px;height:1px;background:#858585"></div><div class="a" style="left:0;top:509px;width:25px;height:20px;line-height:20px;text-align:center;font-size:13px;color:#dcdcdc">14</div><div class="a" style="left:0;top:547px;width:25px;height:1px;background:#858585"></div><div class="a" style="left:0;top:529px;width:25px;height:20px;line-height:20px;text-align:center;font-size:13px;color:#dcdcdc">15</div><div class="a" style="left:0;top:567px;width:25px;height:1px;background:#858585"></div><div class="a" style="left:0;top:549px;width:25px;height:20px;line-height:20px;text-align:center;font-size:13px;color:#dcdcdc">16</div><div class="a" style="left:0;top:587px;width:25px;height:1px;background:#858585"></div><div class="a" style="left:0;top:569px;width:25px;height:20px;line-height:20px;text-align:center;font-size:13px;color:#dcdcdc">17</div><div class="a" style="left:0;top:607px;width:25px;height:1px;background:#858585"></div><div class="a" style="left:0;top:589px;width:25px;height:20px;line-height:20px;text-align:center;font-size:13px;color:#dcdcdc">18</div><div class="a" style="left:0;top:627px;width:25px;height:1px;background:#858585"></div><div class="a" style="left:0;top:609px;width:25px;height:20px;line-height:20px;text-align:center;font-size:13px;color:#dcdcdc">19</div><div class="a" style="left:0;top:647px;width:25px;height:1px;background:#858585"></div><div class="a" style="left:0;top:629px;width:25px;height:20px;line-height:20px;text-align:center;font-size:13px;color:#dcdcdc">20</div><div class="a" style="left:0;top:667px;width:25px;height:1px;background:#858585"></div><div class="a" style="left:0;top:649px;width:25px;height:20px;line-height:20px;text-align:center;font-size:13px;color:#dcdcdc">21</div><div class="a" style="left:0;top:687px;width:25px;height:1px;background:#858585"></div><div class="a" style="left:0;top:669px;width:25px;height:20px;line-height:20px;text-align:center;font-size:13px;color:#dcdcdc">22</div><div class="a" style="left:0;top:707px;width:25px;height:1px;background:#858585"></div><div class="a" style="left:0;top:689px;width:25px;height:20px;line-height:20px;text-align:center;font-size:13px;color:#dcdcdc">23</div><div class="a" style="left:0;top:727px;width:25px;height:1px;background:#858585"></div><div class="a" style="left:0;top:709px;width:25px;height:20px;line-height:20px;text-align:center;font-size:13px;color:#dcdcdc">24</div><div class="a" style="left:26px;top:244px;width:511px;text-align:center;font-size:18.2px;font-weight:bold;color:#000;line-height:22px">Vertical Data Table</div><div class="a" style="left:538px;top:244px;width:800px;text-align:center;font-size:18.2px;font-weight:bold;color:#000;line-height:22px">Horizontal Data Table</div><div class="c g bold" style="left:28px;top:269px;">Item</div><div class="c g bold" style="left:92px;top:269px;">Color</div><div class="c g bold" style="left:156px;top:269px;">Size</div><div class="c g bold" style="left:220px;top:269px;">Shape</div><div class="c g bold" style="left:284px;top:269px;">Price</div><div class="c g bold" style="left:348px;top:269px;">Quantity Sold</div><div class="c g bold" style="left:442px;top:269px;">Total Revenue</div><div class="c g n" style="right:1354px;top:289px;">1</div><div class="c g" style="left:92px;top:289px;">Red</div><div class="c g" style="left:156px;top:289px;">Big</div><div class="c g" style="left:220px;top:289px;">Round</div><div class="c g" style="left:289px;top:289px;">$</div><div class="c g n" style="right:1103px;top:289px;">30.00</div><div class="c g n" style="right:1004px;top:289px;">50</div><div class="c g" style="left:447px;top:289px;">$</div><div class="c g n" style="right:911px;top:289px;">1,500.00</div><div class="c g n" style="right:1354px;top:309px;">2</div><div class="c g" style="left:92px;top:309px;">Blue</div><div class="c g" style="left:156px;top:309px;">Small</div><div class="c g" style="left:220px;top:309px;">Round</div><div class="c g" style="left:289px;top:309px;">$</div><div class="c g n" style="right:1103px;top:309px;">20.00</div><div class="c g n" style="right:1004px;top:309px;">60</div><div class="c g" style="left:447px;top:309px;">$</div><div class="c g n" style="right:911px;top:309px;">1,200.00</div><div class="c g n" style="right:1354px;top:329px;">3</div><div class="c g" style="left:92px;top:329px;">Green</div><div class="c g" style="left:156px;top:329px;">Small</div><div class="c g" style="left:220px;top:329px;">Round</div><div class="c g" style="left:289px;top:329px;">$</div><div class="c g n" style="right:1103px;top:329px;">25.00</div><div class="c g n" style="right:1004px;top:329px;">65</div><div class="c g" style="left:447px;top:329px;">$</div><div class="c g n" style="right:911px;top:329px;">1,625.00</div><div class="c g n" style="right:1354px;top:349px;">4</div><div class="c g" style="left:92px;top:349px;">Red</div><div class="c g" style="left:156px;top:349px;">Big</div><div class="c g" style="left:220px;top:349px;">Angular</div><div class="c g" style="left:289px;top:349px;">$</div><div class="c g n" style="right:1103px;top:349px;">30.00</div><div class="c g n" style="right:1004px;top:349px;">20</div><div class="c g" style="left:447px;top:349px;">$</div><div class="c g n" style="right:911px;top:349px;">600.00</div><div class="c g n" style="right:1354px;top:369px;">5</div><div class="c g" style="left:92px;top:369px;">Red</div><div class="c g" style="left:156px;top:369px;">Big</div><div class="c g" style="left:220px;top:369px;">Round</div><div class="c g" style="left:289px;top:369px;">$</div><div class="c g n" style="right:1103px;top:369px;">10.00</div><div class="c g n" style="right:1004px;top:369px;">85</div><div class="c g" style="left:447px;top:369px;">$</div><div class="c g n" style="right:911px;top:369px;">850.00</div><div class="c g n" style="right:1354px;top:389px;">6</div><div class="c g" style="left:92px;top:389px;">Blue</div><div class="c g" style="left:156px;top:389px;">Average</div><div class="c g" style="left:220px;top:389px;">Angular</div><div class="c g" style="left:289px;top:389px;">$</div><div class="c g n" style="right:1103px;top:389px;">10.00</div><div class="c g n" style="right:1004px;top:389px;">10</div><div class="c g" style="left:447px;top:389px;">$</div><div class="c g n" style="right:911px;top:389px;">100.00</div><div class="c g n" style="right:1354px;top:409px;">7</div><div class="c g" style="left:92px;top:409px;">Green</div><div class="c g" style="left:156px;top:409px;">Average</div><div class="c g" style="left:220px;top:409px;">Round</div><div class="c g" style="left:289px;top:409px;">$</div><div class="c g n" style="right:1103px;top:409px;">15.00</div><div class="c g n" style="right:1004px;top:409px;">35</div><div class="c g" style="left:447px;top:409px;">$</div><div class="c g n" style="right:911px;top:409px;">525.00</div><div class="c g n" style="right:1354px;top:429px;">8</div><div class="c g" style="left:92px;top:429px;">Brown</div><div class="c g" style="left:156px;top:429px;">Big</div><div class="c g" style="left:220px;top:429px;">Angular</div><div class="c g" style="left:289px;top:429px;">$</div><div class="c g n" style="right:1103px;top:429px;">30.00</div><div class="c g n" style="right:1004px;top:429px;">40</div><div class="c g" style="left:447px;top:429px;">$</div><div class="c g n" style="right:911px;top:429px;">1,200.00</div><div class="c g n" style="right:1354px;top:449px;">9</div><div class="c g" style="left:92px;top:449px;">Yellow</div><div class="c g" style="left:156px;top:449px;">Big</div><div class="c g" style="left:220px;top:449px;">Angular</div><div class="c g" style="left:289px;top:449px;">$</div><div class="c g n" style="right:1103px;top:449px;">20.00</div><div class="c g n" style="right:1004px;top:449px;">40</div><div class="c g" style="left:447px;top:449px;">$</div><div class="c g n" style="right:911px;top:449px;">800.00</div><div class="c g n" style="right:1354px;top:469px;">10</div><div class="c g" style="left:92px;top:469px;">Red</div><div class="c g" style="left:156px;top:469px;">Big</div><div class="c g" style="left:220px;top:469px;">Angular</div><div class="c g" style="left:289px;top:469px;">$</div><div class="c g n" style="right:1103px;top:469px;">25.00</div><div class="c g n" style="right:1004px;top:469px;">55</div><div class="c g" style="left:447px;top:469px;">$</div><div class="c g n" style="right:911px;top:469px;">1,375.00</div><div class="c b bold" style="left:540px;top:269px;">Item</div><div class="c b bold" style="left:638px;top:269px;">1</div><div class="c b bold" style="left:712px;top:269px;">2</div><div class="c b bold" style="left:786px;top:269px;">3</div><div class="c b bold" style="left:860px;top:269px;">4</div><div class="c b bold" style="left:925px;top:269px;">5</div><div class="c b bold" style="left:990px;top:269px;">6</div><div class="c b bold" style="left:1055px;top:269px;">7</div><div class="c b bold" style="left:1120px;top:269px;">8</div><div class="c b bold" style="left:1194px;top:269px;">9</div><div class="c b bold" style="left:1265px;top:269px;">10</div><div class="c b" style="left:540px;top:289px;">Color</div><div class="c b" style="left:638px;top:289px;">Red</div><div class="c b" style="left:712px;top:289px;">Blue</div><div class="c b" style="left:786px;top:289px;">Green</div><div class="c b" style="left:860px;top:289px;">Red</div><div class="c b" style="left:925px;top:289px;">Red</div><div class="c b" style="left:990px;top:289px;">Blue</div><div class="c b" style="left:1055px;top:289px;">Green</div><div class="c b" style="left:1120px;top:289px;">Brown</div><div class="c b" style="left:1194px;top:289px;">Yellow</div><div class="c b" style="left:1265px;top:289px;">Red</div><div class="c b" style="left:540px;top:309px;">Size</div><div class="c b" style="left:638px;top:309px;">Big</div><div class="c b" style="left:712px;top:309px;">Small</div><div class="c b" style="left:786px;top:309px;">Small</div><div class="c b" style="left:860px;top:309px;">Big</div><div class="c b" style="left:925px;top:309px;">Big</div><div class="c b" style="left:990px;top:309px;">Average</div><div class="c b" style="left:1055px;top:309px;">Average</div><div class="c b" style="left:1120px;top:309px;">Big</div><div class="c b" style="left:1194px;top:309px;">Big</div><div class="c b" style="left:1265px;top:309px;">Big</div><div class="c b" style="left:540px;top:329px;">Shape</div><div class="c b" style="left:638px;top:329px;">Round</div><div class="c b" style="left:712px;top:329px;">Round</div><div class="c b" style="left:786px;top:329px;">Round</div><div class="c b" style="left:860px;top:329px;">Angular</div><div class="c b" style="left:925px;top:329px;">Round</div><div class="c b" style="left:990px;top:329px;">Angular</div><div class="c b" style="left:1055px;top:329px;">Round</div><div class="c b" style="left:1120px;top:329px;">Angular</div><div class="c b" style="left:1194px;top:329px;">Angular</div><div class="c b" style="left:1265px;top:329px;">Angular</div><div class="c b" style="left:540px;top:349px;">Price</div><div class="c b" style="left:540px;top:369px;">Quantity Sold</div><div class="c b" style="left:540px;top:389px;">Total Revenue</div><div class="c b" style="left:643px;top:349px;">$</div><div class="c b n" style="right:739px;top:349px;">30.00</div><div class="c b n" style="right:734px;top:369px;">50</div><div class="c b" style="left:643px;top:389px;">$</div><div class="c b n" style="right:739px;top:389px;">1,500.00</div><div class="c b" style="left:717px;top:349px;">$</div><div class="c b n" style="right:665px;top:349px;">20.00</div><div class="c b n" style="right:660px;top:369px;">60</div><div class="c b" style="left:717px;top:389px;">$</div><div class="c b n" style="right:665px;top:389px;">1,200.00</div><div class="c b" style="left:791px;top:349px;">$</div><div class="c b n" style="right:591px;top:349px;">25.00</div><div class="c b n" style="right:586px;top:369px;">65</div><div class="c b" style="left:791px;top:389px;">$</div><div class="c b n" style="right:591px;top:389px;">1,625.00</div><div class="c b" style="left:865px;top:349px;">$</div><div class="c b n" style="right:526px;top:349px;">30.00</div><div class="c b n" style="right:521px;top:369px;">20</div><div class="c b" style="left:865px;top:389px;">$</div><div class="c b n" style="right:526px;top:389px;">600.00</div><div class="c b" style="left:930px;top:349px;">$</div><div class="c b n" style="right:461px;top:349px;">10.00</div><div class="c b n" style="right:456px;top:369px;">85</div><div class="c b" style="left:930px;top:389px;">$</div><div class="c b n" style="right:461px;top:389px;">850.00</div><div class="c b" style="left:995px;top:349px;">$</div><div class="c b n" style="right:396px;top:349px;">10.00</div><div class="c b n" style="right:391px;top:369px;">10</div><div class="c b" style="left:995px;top:389px;">$</div><div class="c b n" style="right:396px;top:389px;">100.00</div><div class="c b" style="left:1060px;top:349px;">$</div><div class="c b n" style="right:331px;top:349px;">15.00</div><div class="c b n" style="right:326px;top:369px;">35</div><div class="c b" style="left:1060px;top:389px;">$</div><div class="c b n" style="right:331px;top:389px;">525.00</div><div class="c b" style="left:1125px;top:349px;">$</div><div class="c b n" style="right:257px;top:349px;">30.00</div><div class="c b n" style="right:252px;top:369px;">40</div><div class="c b" style="left:1125px;top:389px;">$</div><div class="c b n" style="right:257px;top:389px;">1,200.00</div><div class="c b" style="left:1199px;top:349px;">$</div><div class="c b n" style="right:186px;top:349px;">20.00</div><div class="c b n" style="right:181px;top:369px;">40</div><div class="c b" style="left:1199px;top:389px;">$</div><div class="c b n" style="right:186px;top:389px;">800.00</div><div class="c b" style="left:1270px;top:349px;">$</div><div class="c b n" style="right:110px;top:349px;">25.00</div><div class="c b n" style="right:105px;top:369px;">55</div><div class="c b" style="left:1270px;top:389px;">$</div><div class="c b n" style="right:110px;top:389px;">1,375.00</div><div class="a" style="left:1336px;top:403px;width:2px;height:2px;background:#3e4d78"></div><div class="a" style="left:1334px;top:405px;width:4px;height:3px;background:#3e4d78"></div></body></html>
